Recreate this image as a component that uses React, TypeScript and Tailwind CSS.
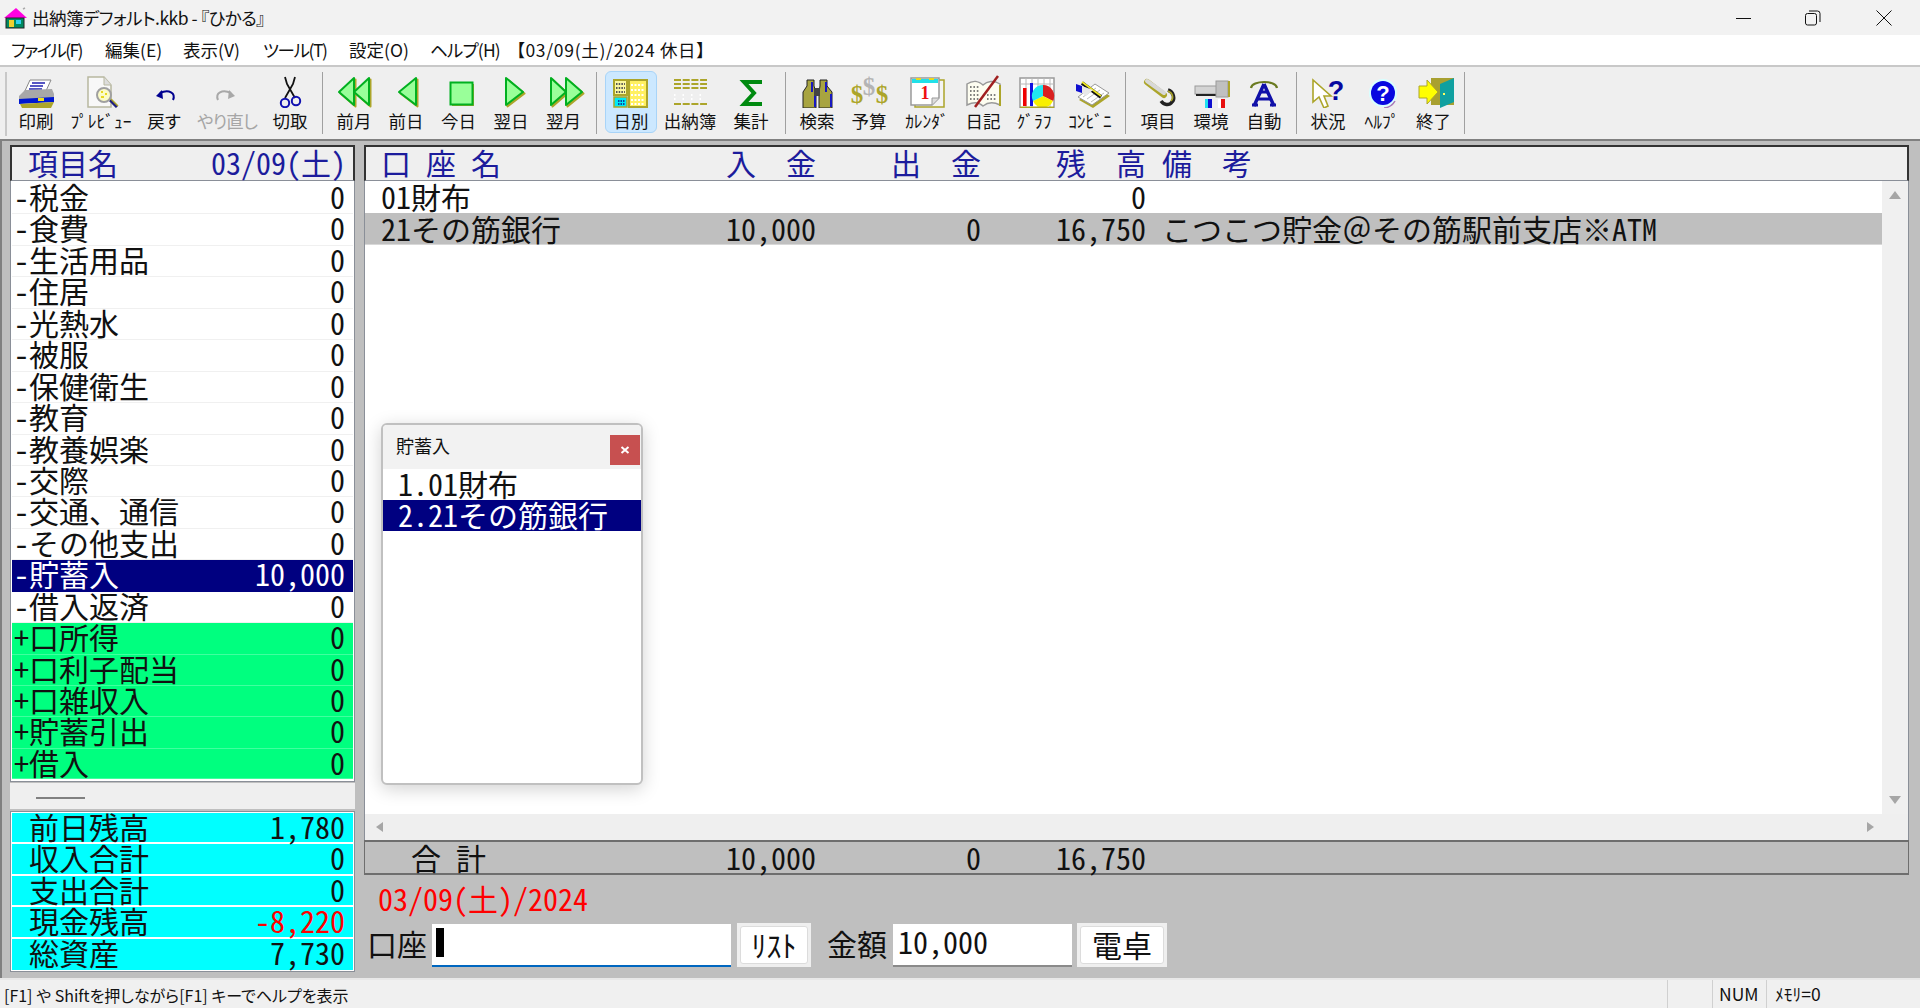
import React from "react";

const cjk = "[font-family:'Noto_Sans_CJK_JP',sans-serif]";
const big = "[font-family:'Noto_Sans_CJK_JP',sans-serif] [font-feature-settings:'hwid'] text-[30px] leading-[31px] whitespace-pre";
const ui = "[font-family:'Noto_Sans_CJK_JP',sans-serif] [font-feature-settings:'palt'] text-[17.5px] leading-[22px] whitespace-pre";

const Svg = ({ children }: { children: React.ReactNode }) => (
  <svg width="44" height="36" viewBox="0 0 44 36" className="shrink-0">{children}</svg>
);

const O = "#aca52a";
const Gs = "#00b020";
const Gf = "#99ff99";
const tri = (pts: string, key: string) => (
  <g key={key}>
    <polygon points={pts} transform="translate(1.5 1.5)" fill={O} stroke={O} strokeWidth="2" strokeLinejoin="round" />
    <polygon points={pts} fill={Gf} stroke={Gs} strokeWidth="2" strokeLinejoin="round" />
  </g>
);

const icons: Record<string, React.ReactNode> = {
  print: (
    <Svg>
      <polygon points="16,8 37,8 31,21 10,21" fill="#fff" stroke="#888" />
      <path d="M18 11h13M16 14h13M15 17h13" stroke="#2020b0" strokeWidth="1.5" />
      <polygon points="5,24 11,18 38,17 40,22 40,27 5,28" fill="#a8a8a8" />
      <polygon points="5,27 40,25 40,30 5,32" fill="#0018d0" />
      <rect x="24" y="26" width="6" height="3" fill="#f0e020" />
      <polygon points="6,32 40,30 37,36 8,36" fill={O} />
    </Svg>
  ),
  preview: (
    <Svg>
      <path d="M9 5H25L32 13V35H9Z" fill="#f8f8f8" stroke="#b8b8a0" strokeWidth="1.5" />
      <path d="M25 5V13H32" fill="#ddd" stroke="#b8b8a0" />
      <line x1="31" y1="28" x2="38" y2="35" stroke="#202080" strokeWidth="3" />
      <line x1="32" y1="27" x2="39" y2="34" stroke={O} strokeWidth="1.5" />
      <circle cx="25" cy="23" r="7" fill="#fbfbc8" stroke="#a0a0a0" strokeWidth="2" />
      <path d="M22 20h2M26 22h2M22 25h3" stroke="#e8d820" strokeWidth="2" />
    </Svg>
  ),
  undo: (
    <Svg>
      <path d="M31 28C34 21 27 17 18 21" fill="none" stroke="#000090" strokeWidth="2" />
      <polygon points="14,24 20,18 21,27" fill="#000090" />
    </Svg>
  ),
  redo: (
    <Svg>
      <path d="M13 28C10 21 17 17 26 21" fill="none" stroke="#a8a8a8" strokeWidth="2" />
      <polygon points="30,24 24,18 23,27" fill="#a8a8a8" />
    </Svg>
  ),
  cut: (
    <Svg>
      <path d="M17 5L19 12L27 26M27 5L25 12L17 26" fill="none" stroke="#111" strokeWidth="1.8" />
      <circle cx="17" cy="31" r="4.2" fill="none" stroke="#1010b0" strokeWidth="2" />
      <circle cx="28" cy="29" r="4.2" fill="none" stroke="#1010b0" strokeWidth="2" />
    </Svg>
  ),
  prevM: <Svg>{tri("22,6 7,20 22,33", "a")}{tri("37,6 37,33 22,20", "b")}</Svg>,
  prevD: <Svg>{tri("32,6 15,20 32,33", "a")}</Svg>,
  today: (
    <Svg>
      <rect x="15" y="12" width="22" height="22" fill={O} />
      <rect x="13.5" y="10.5" width="22" height="22" fill={Gf} stroke={Gs} strokeWidth="2" />
    </Svg>
  ),
  nextD: <Svg>{tri("17,6 34,20 17,33", "a")}</Svg>,
  nextM: <Svg>{tri("9,6 24,20 9,33", "a")}{tri("24,6 40,20 24,33", "b")}</Svg>,
  daily: (
    <Svg>
      <rect x="5" y="8" width="13" height="15" fill="#fbf8a0" stroke={O} strokeWidth="2" />
      <path d="M7 12h9M7 16h9M7 20h9" stroke="#555" strokeWidth="2" strokeDasharray="1.5 1.2" />
      <rect x="5" y="25" width="13" height="10" fill="#00e8f8" stroke={O} strokeWidth="1.5" />
      <path d="M9 29h7M9 32h7" stroke="#101080" strokeWidth="1.6" strokeDasharray="1.5 1" />
      <rect x="20" y="8" width="18" height="27" fill="#fff060" stroke={O} strokeWidth="2" />
      <path d="M22 13h14M22 18h14M22 23h14M22 28h14M22 32h14" stroke="#fff" strokeWidth="2" strokeDasharray="2 1.5" />
    </Svg>
  ),
  book: (
    <Svg>
      <path d="M6 8h33M6 12h33M6 16h33" stroke="#aca52a" strokeWidth="2.2" strokeDasharray="7 1.7" />
      <path d="M6 23h33M6 27h33" stroke="#fff" strokeWidth="2" strokeDasharray="1.5 7" />
      <path d="M6 32h33" stroke="#aca52a" strokeWidth="2.2" strokeDasharray="7 1.7" />
    </Svg>
  ),
  sum: (
    <Svg>
      <path d="M33 10H15L25 21L15 32H33" fill="none" stroke="#008a10" strokeWidth="4" strokeLinejoin="miter" />
    </Svg>
  ),
  find: (
    <Svg>
      <path d="M12 8H19V14L21 20V36H8V20L12 14Z" fill="#a8a440" stroke="#222" strokeWidth="1" />
      <path d="M25 8H32V14L37 20V36H24V20L25 14Z" fill="#a8a440" stroke="#222" strokeWidth="1" />
      <path d="M17 10V20M31 10V20M20 22V35M36 22V35" stroke="#1818c0" strokeWidth="2" />
      <rect x="19" y="16" width="6" height="8" fill="#444" />
    </Svg>
  ),
  budget: (
    <Svg>
      <text x="10" y="31" textAnchor="middle" fontFamily="Liberation Serif" fontWeight="700" fontSize="25" fill={O}>$</text>
      <text x="22" y="23" textAnchor="middle" fontFamily="Liberation Serif" fontWeight="700" fontSize="25" fill="#b4b4b4">$</text>
      <text x="35" y="31" textAnchor="middle" fontFamily="Liberation Serif" fontWeight="700" fontSize="25" fill={O}>$</text>
    </Svg>
  ),
  cal: (
    <Svg>
      <rect x="10" y="8" width="29" height="27" fill="#f4f4f4" stroke={O} strokeWidth="1.5" />
      <path d="M6 6H34V26L27 33H6Z" fill="#fff" stroke="#9a9a9a" strokeWidth="1.5" />
      <rect x="7" y="7" width="26" height="4" fill="#20e0e8" />
      <path d="M11 7h5M24 7h5" stroke="#e8d820" strokeWidth="2" />
      <text x="20" y="27" textAnchor="middle" fontFamily="Liberation Serif" fontWeight="700" fontSize="18" fill="#ee1010">1</text>
      <path d="M27 33V26H34" fill="#ddd" stroke="#9a9a9a" />
    </Svg>
  ),
  diary: (
    <Svg>
      <path d="M6 12C12 8 18 9 22 13C26 9 33 8 39 12V33C33 30 27 30 22 34C18 30 12 30 6 33Z" fill="#fdfdf0" stroke="#999" strokeWidth="1.5" />
      <path d="M39 13V34" stroke={O} strokeWidth="2" />
      <path d="M9 15h9M9 19h9M9 23h9M9 27h9M26 23h10M26 27h10" stroke="#555" strokeWidth="1.6" strokeDasharray="1.6 1.8" />
      <path d="M14 35L37 4" stroke="#a02020" strokeWidth="2.5" />
    </Svg>
  ),
  graph: (
    <Svg>
      <rect x="8" y="6" width="34" height="30" fill="#fff" stroke="#9a9a9a" strokeWidth="1.5" />
      <path d="M14 6V36M20 6V36M26 6V36M32 6V36M38 6V36M8 12H42" stroke="#b8b8b8" strokeWidth="1" />
      <rect x="11" y="16" width="3.5" height="18" fill="#f00000" />
      <rect x="18" y="11" width="3" height="23" fill="#1010e0" />
      <path d="M31 24V13A11 11 0 0 1 41 29Z" fill="#d82020" />
      <path d="M31 24L41 29A11 11 0 0 1 21 29Z" fill="#f8f000" />
      <path d="M31 24L21 29A11 11 0 0 1 31 13Z" fill="#20e8f0" />
      <rect x="8" y="34.5" width="34" height="1.5" fill={O} />
    </Svg>
  ),
  conv: (
    <Svg>
      <polygon points="11,28 28,15 42,24 25,36" fill={O} />
      <polygon points="10,25 27,12 41,21 24,33" fill="#fff" stroke="#999" strokeWidth="1" />
      <path d="M15 25L28 16M19 27L32 18M23 30L36 21" stroke="#bbb" strokeWidth="1" />
      <path d="M14 11L33 25" stroke="#111" strokeWidth="3.6" />
      <path d="M14 10L33 24" stroke="#f0e820" strokeWidth="1.6" />
      <polygon points="8,12 14,14 14,21 8,19" fill="#1010d0" />
      <polygon points="14,14 25,18 18,24 14,21" fill="#e8e8e8" />
    </Svg>
  ),
  item: (
    <Svg>
      <path d="M11 10L28 23" stroke={O} strokeWidth="6" strokeLinecap="round" />
      <path d="M11 9L28 21" stroke="#d8d8d8" strokeWidth="4" strokeLinecap="round" />
      <path d="M32 18C38 20 39 27 36 30C33 34 28 33 25 29" fill="none" stroke="#222" strokeWidth="3.5" />
      <path d="M32 19C37 21 38 26 35 29" fill="none" stroke={O} strokeWidth="1.5" />
    </Svg>
  ),
  env: (
    <Svg>
      <rect x="6" y="14" width="25" height="8" fill="#d4d4d4" stroke="#9a9a9a" />
      <rect x="7" y="22" width="24" height="2" fill="#222" />
      <rect x="27" y="9" width="12" height="16" fill="#c0c0c0" stroke="#9a9a9a" />
      <rect x="39" y="9" width="2" height="16" fill={O} />
      <rect x="16" y="27" width="3" height="10" fill="#20e0f0" />
      <rect x="19" y="27" width="4" height="10" fill="#1010d0" />
      <rect x="29" y="27" width="3" height="10" fill="#ffffff" />
      <rect x="32" y="27" width="4" height="10" fill="#e81010" />
    </Svg>
  ),
  auto: (
    <Svg>
      <path d="M9 16C10 8 34 8 35 16" fill="none" stroke="#6a7a20" strokeWidth="2.2" />
      <path d="M22 12L12 34M22 12L32 34" stroke="#1010a8" strokeWidth="3.4" fill="none" />
      <path d="M10 33H16M28 33H34M15 27H29" stroke="#1010a8" strokeWidth="3" />
      <path d="M19 20H25" stroke="#1010a8" strokeWidth="3" />
    </Svg>
  ),
  status: (
    <Svg>
      <polygon points="7,8 7,30 13,25 18,36 22,34 18,24 25,24" fill="#fff" stroke={O} strokeWidth="1.6" />
      <text x="30" y="28" textAnchor="middle" fontFamily="Liberation Sans" fontWeight="700" fontSize="27" fill="#0808a0">?</text>
    </Svg>
  ),
  help: (
    <Svg>
      <circle cx="23" cy="21" r="14" fill="#d8ffff" />
      <path d="M35 29A14 14 0 0 1 24 36" fill="none" stroke="#a878b8" strokeWidth="1.5" />
      <circle cx="23" cy="21" r="12" fill="#0808e0" />
      <text x="23" y="29" textAnchor="middle" fontFamily="Liberation Sans" fontWeight="700" fontSize="22" fill="#fff">?</text>
    </Svg>
  ),
  exit: (
    <Svg>
      <polygon points="19,6 42,6 42,33 19,33" fill="#a8a030" />
      <polygon points="28,12 42,6 42,30 28,36" fill="#10a0a0" />
      <rect x="31" y="21" width="2" height="2" fill="#ffff60" />
      <polygon points="7,14 15,14 15,8 26,20 15,32 15,26 7,26" fill="#ffff00" stroke={O} strokeWidth="1" />
    </Svg>
  ),
};

type Tool = { label: string; icon: string; w: string; dim?: boolean; active?: boolean };

const Btn = ({ t }: { t: Tool }) => (
  <div className={`${t.w} h-[62px] flex flex-col items-center shrink-0 ${t.active ? "bg-[#cce8ff] rounded-md border border-[#a8d4f8] -mt-px" : ""}`}>
    {icons[t.icon]}
    <span className={`${ui} mt-[2px] ${t.dim ? "text-[#a6a6a6] tracking-[-0.8px]" : "text-[#111]"}`}>{t.label}</span>
  </div>
);

const Sep = ({ w }: { w: string }) => (
  <div className={`${w} h-[62px] flex justify-center shrink-0`}>
    <div className="w-[1px] h-full bg-[#a0a0a0]" />
  </div>
);

const g1: Tool[] = [
  { label: "印刷", icon: "print", w: "w-[56px]" },
  { label: "ﾌﾟﾚﾋﾞｭｰ", icon: "preview", w: "w-[74px]" },
  { label: "戻す", icon: "undo", w: "w-[52px]" },
  { label: "やり直し", icon: "redo", w: "w-[74px]", dim: true },
  { label: "切取", icon: "cut", w: "w-[52px]" },
];
const g2: Tool[] = [
  { label: "前月", icon: "prevM", w: "w-[52px]" },
  { label: "前日", icon: "prevD", w: "w-[52px]" },
  { label: "今日", icon: "today", w: "w-[53px]" },
  { label: "翌日", icon: "nextD", w: "w-[52px]" },
  { label: "翌月", icon: "nextM", w: "w-[53px]" },
];
const g3: Tool[] = [
  { label: "日別", icon: "daily", w: "w-[52px]", active: true },
  { label: "出納簿", icon: "book", w: "w-[66px]" },
  { label: "集計", icon: "sum", w: "w-[56px]" },
];
const g4: Tool[] = [
  { label: "検索", icon: "find", w: "w-[52px]" },
  { label: "予算", icon: "budget", w: "w-[52px]" },
  { label: "ｶﾚﾝﾀﾞ", icon: "cal", w: "w-[64px]" },
  { label: "日記", icon: "diary", w: "w-[48px]" },
  { label: "ｸﾞﾗﾌ", icon: "graph", w: "w-[54px]" },
  { label: "ｺﾝﾋﾞﾆ", icon: "conv", w: "w-[58px]" },
];
const g5: Tool[] = [
  { label: "項目", icon: "item", w: "w-[54px]" },
  { label: "環境", icon: "env", w: "w-[52px]" },
  { label: "自動", icon: "auto", w: "w-[54px]" },
];
const g6: Tool[] = [
  { label: "状況", icon: "status", w: "w-[54px]" },
  { label: "ﾍﾙﾌﾟ", icon: "help", w: "w-[54px]" },
  { label: "終了", icon: "exit", w: "w-[49px]" },
];

const items: [string, string, "w" | "s" | "g"][] = [
  ["-税金", "0", "w"],
  ["-食費", "0", "w"],
  ["-生活用品", "0", "w"],
  ["-住居", "0", "w"],
  ["-光熱水", "0", "w"],
  ["-被服", "0", "w"],
  ["-保健衛生", "0", "w"],
  ["-教育", "0", "w"],
  ["-教養娯楽", "0", "w"],
  ["-交際", "0", "w"],
  ["-交通、通信", "0", "w"],
  ["-その他支出", "0", "w"],
  ["-貯蓄入", "10,000", "s"],
  ["-借入返済", "0", "w"],
  ["+口所得", "0", "g"],
  ["+口利子配当", "0", "g"],
  ["+口雑収入", "0", "g"],
  ["+貯蓄引出", "0", "g"],
  ["+借入", "0", "g"],
];

const totals: [string, string, boolean][] = [
  [" 前日残高", "1,780", false],
  [" 収入合計", "0", false],
  [" 支出合計", "0", false],
  [" 現金残高", "-8,220", true],
  [" 総資産", "7,730", false],
];

const Cols = ({ a, b, c, d, e }: { a: string; b: string; c: string; d: string; e: React.ReactNode }) => (
  <div className={`${big} flex`}>
    <span className="w-[345px] shrink-0">{a}</span>
    <span className="w-[89px] shrink-0 text-right">{b}</span>
    <span className="w-[166px] shrink-0 text-right">{c}</span>
    <span className="w-[165px] shrink-0 text-right">{d}</span>
    <span className="ml-[16px]">{e}</span>
  </div>
);

const Arrow = ({ d }: { d: string }) => (
  <svg width="14" height="12" viewBox="0 0 14 12" className="shrink-0"><polygon points={d} fill="#a6a6a6" /></svg>
);

export default function App() {
  return (
    <div className="relative w-full h-screen overflow-hidden flex flex-col bg-[#efefef] text-[#111]">
      {/* title bar */}
      <div className="h-[35px] shrink-0 bg-[#f2f2f2] flex items-center">
        <svg width="24" height="22" viewBox="0 0 24 22" className="ml-[3px] mt-[1px]">
          <path d="M20 2l2-1" stroke="#aaa" strokeWidth="1.5" />
          <polygon points="13,1 24,11 1,11" fill="#ff00e0" />
          <rect x="3" y="11" width="18" height="10" fill="#008a60" stroke="#222" strokeWidth="1" />
          <rect x="6" y="13" width="5" height="7" fill="#f0d030" />
          <rect x="13" y="13" width="5" height="4" fill="#30d0f0" />
        </svg>
        <span className={`${ui} ml-[5px] tracking-[-0.5px]`}>出納簿デフォルト.kkb - 『ひかる』</span>
        <div className="ml-auto mr-[28px] flex items-center gap-[53px]">
          <svg width="16" height="16" viewBox="0 0 16 16"><path d="M0 8.5H15" stroke="#111" /></svg>
          <svg width="16" height="16" viewBox="0 0 16 16">
            <rect x="0.5" y="3.5" width="11" height="11.5" rx="2" fill="none" stroke="#111" />
            <path d="M4 1H12.5A2.5 2.5 0 0 1 15 3.5V12" fill="none" stroke="#111" />
          </svg>
          <svg width="16" height="16" viewBox="0 0 16 16" className="ml-[2px]"><path d="M0.5 0.5L15.5 15.5M15.5 0.5L0.5 15.5" stroke="#111" /></svg>
        </div>
      </div>
      {/* menu bar */}
      <div className={`${ui} h-[32px] shrink-0 bg-white border-b-2 border-[#c8c8c8] flex items-center`}>
        <span className="ml-[11px] w-[94px] tracking-[-1.6px]">ファイル(F)</span>
        <span className="w-[78px]">編集(E)</span>
        <span className="w-[80px]">表示(V)</span>
        <span className="w-[86px] tracking-[-1.4px]">ツール(T)</span>
        <span className="w-[81px]">設定(O)</span>
        <span className="w-[84px] tracking-[-0.8px]">ヘルプ(H)</span>
        <span className="ml-[2px] tracking-[0.7px]">【03/09(土)/2024 休日】</span>
      </div>
      {/* toolbar */}
      <div className="h-[72px] shrink-0 bg-[#efefef] flex items-start pt-[5px]">
        <div className="ml-[5px] mr-[1px] w-[2px] h-[64px] bg-[#c8c8c8]" />
        {g1.map((t) => <Btn key={t.label} t={t} />)}
        <Sep w="w-[12px]" />
        {g2.map((t) => <Btn key={t.label} t={t} />)}
        <Sep w="w-[12px]" />
        <div className="w-[3px]" />
        {g3.map((t) => <Btn key={t.label} t={t} />)}
        <Sep w="w-[12px]" />
        {g4.map((t) => <Btn key={t.label} t={t} />)}
        <Sep w="w-[12px]" />
        {g5.map((t) => <Btn key={t.label} t={t} />)}
        <Sep w="w-[10px]" />
        {g6.map((t) => <Btn key={t.label} t={t} />)}
        <Sep w="w-[12px]" />
      </div>
      {/* main */}
      <div className="flex-1 min-h-0 bg-[#bfbfbf] border-t-2 border-l-2 border-[#808080] pl-[8px] pr-[11px] pt-[4px] flex gap-[9px]">
        {/* left column */}
        <div className="w-[345px] shrink-0 flex flex-col">
          <div className={`${big} h-[36px] shrink-0 bg-[#efefef] text-[#1c1c9c] border-2 border-b border-[#333] border-b-[#8a8f98] flex justify-between pl-[1px] pr-[7px]`}>
            <span>{" 項目名"}</span>
            <span>03/09(土)</span>
          </div>
          <div className="h-[601px] shrink-0 bg-white border border-t-0 border-[#8a8f98] p-[1px] pt-[2px]">
            {items.map(([l, v, k]) => (
              <div
                key={l}
                className={`${big} h-[31.45px] last:h-[30px] flex justify-between pl-[2px] pr-[8px] border-b ${k === "s" ? "bg-[#000080] text-white border-[#000080]" : k === "g" ? "bg-[#00ff7f] border-[#40ff9f]" : "border-[#f0f0f0]"}`}
              >
                <span className="-mt-[2px]">{l}</span>
                <span className="-mt-[2px]">{v}</span>
              </div>
            ))}
          </div>
          <div className="h-[26px] mt-[1px] shrink-0 bg-[#efefef] flex items-center pl-[26px] pt-[3px]">
            <div className="w-[49px] h-[2px] bg-[#808080]" />
          </div>
          <div className="mt-[2px] shrink-0 bg-white border border-[#8a8f98] p-[1px]">
            {totals.map(([l, v, red]) => (
              <div key={l} className={`${big} h-[31.4px] flex justify-between bg-[#00ffff] border-b-2 border-white last:border-b-0 pl-[2px] pr-[8px]`}>
                <span className="-mt-[2px]">{l}</span>
                <span className={`-mt-[2px] ${red ? "text-[#ff0000]" : ""}`}>{v}</span>
              </div>
            ))}
          </div>
        </div>
        {/* right column */}
        <div className="flex-1 min-w-0 flex flex-col">
          <div className="h-[36px] shrink-0 bg-[#efefef] text-[#1c1c9c] border-2 border-b border-[#333] border-b-[#8a8f98] pl-[15px]">
            <Cols a="口 座 名" b="入  金" c="出  金" d="残  高" e="備  考" />
          </div>
          <div className="h-[633px] shrink-0 bg-white border-x border-[#8a8f98] flex">
            <div className="flex-1 min-w-0">
              <div className="h-[32px] pl-[16px]"><Cols a="01財布" b="" c="" d="0" e="" /></div>
              <div className="h-[32px] pl-[16px] bg-[#bfbfbf] border-b border-[#d8d8d8]">
                <Cols
                  a="21その筋銀行"
                  b="10,000"
                  c="0"
                  d="16,750"
                  e={<>こつこつ貯金<span className="[font-feature-settings:normal]">＠</span>その筋駅前支店※ATM</>}
                />
              </div>
            </div>
            <div className="w-[26px] shrink-0 bg-[#f0f0f0] flex flex-col justify-between items-center py-[8px]">
              <Arrow d="1,10 7,2 13,10" />
              <Arrow d="1,2 7,10 13,2" />
            </div>
          </div>
          <div className="h-[26px] shrink-0 bg-[#efefef] border-x border-[#8a8f98] flex items-center justify-between pl-[8px] pr-[31px]">
            <Arrow d="10,1 3,6 10,11" />
            <Arrow d="4,1 11,6 4,11" />
          </div>
          <div className="h-[35px] shrink-0 border-y-2 border-x border-[#6e6e6e] pl-[16px]">
            <Cols a="  合 計" b="10,000" c="0" d="16,750" e="" />
          </div>
          <div className={`${big} h-[48px] shrink-0 pl-[14px] pt-[8px] text-[#ff0000]`}>03/09(土)/2024</div>
          <div className="h-[44px] shrink-0 flex items-center pl-[3px]">
            <span className={`${big} w-[60px] shrink-0 -mt-[3px]`}>口座</span>
            <div className="ml-[5px] w-[299px] h-[43px] shrink-0 bg-white border-b-2 border-[#0067c0] pl-[4px] pt-[4px]">
              <div className="w-[8px] h-[29px] bg-black" />
            </div>
            <div className="ml-[6px] w-[74px] h-[44px] shrink-0 bg-[#efefef] p-[3px]">
              <div className={`${big} w-full h-full bg-white rounded-[3px] border border-[#dcdcdc] flex items-center justify-center pb-[2px]`}>ﾘｽﾄ</div>
            </div>
            <span className={`${big} ml-[16px] w-[60px] shrink-0 -mt-[3px]`}>金額</span>
            <div className={`${big} ml-[6px] w-[179px] h-[43px] shrink-0 bg-white border-b-2 border-[#8a8a8a] pl-[5px] pt-[2px]`}>10,000</div>
            <div className="ml-[5px] w-[90px] h-[44px] shrink-0 bg-[#efefef] p-[3px]">
              <div className={`${big} w-full h-full bg-white rounded-[3px] border border-[#dcdcdc] flex items-center justify-center pb-[2px]`}>電卓</div>
            </div>
          </div>
        </div>
      </div>
      {/* status bar */}
      <div className={`${ui} h-[30px] shrink-0 bg-[#f0f0f0] border-t-2 border-[#e8e8e8] flex items-center`}>
        <span className="pl-[4px] w-[1667px] shrink-0 mt-[2px] text-[16px]">[F1] や Shiftを押しながら[F1] キーでヘルプを表示</span>
        <span className="w-[45px] h-full shrink-0 border-l border-[#d0d0d0]" />
        <span className="w-[54px] h-full shrink-0 border-l border-[#d0d0d0] pl-[6px] flex items-center">NUM</span>
        <span className="flex-1 h-full border-l border-[#d0d0d0] pl-[8px] flex items-center">ﾒﾓﾘ=0</span>
      </div>
      {/* popup */}
      <div className="absolute left-[381px] top-[423px] w-[262px] h-[362px] bg-white border-2 border-[#c0c0c0] rounded-md overflow-hidden shadow-[0_4px_18px_rgba(0,0,0,0.18)] flex flex-col">
        <div className="h-[44px] shrink-0 bg-[#f2f2f2] flex items-start justify-between">
          <span className={`${cjk} text-[18px] leading-[22px] ml-[13px] mt-[9px]`}>貯蓄入</span>
          <div className="w-[30px] h-[30px] mt-[10px] mr-[1px] bg-[#c75050] flex items-center justify-center">
            <svg width="10" height="10" viewBox="0 0 10 10"><path d="M1.5 2L8.5 8M8.5 2L1.5 8" stroke="#fff" strokeWidth="2" /></svg>
          </div>
        </div>
        <div className={`${big} h-[31px] shrink-0 pl-[15px] -mt-px`}>1.01財布</div>
        <div className={`${big} h-[31px] shrink-0 pl-[15px] mt-px bg-[#000080] text-white`}><div className="-mt-px">2.21その筋銀行</div></div>
      </div>
    </div>
  );
}
